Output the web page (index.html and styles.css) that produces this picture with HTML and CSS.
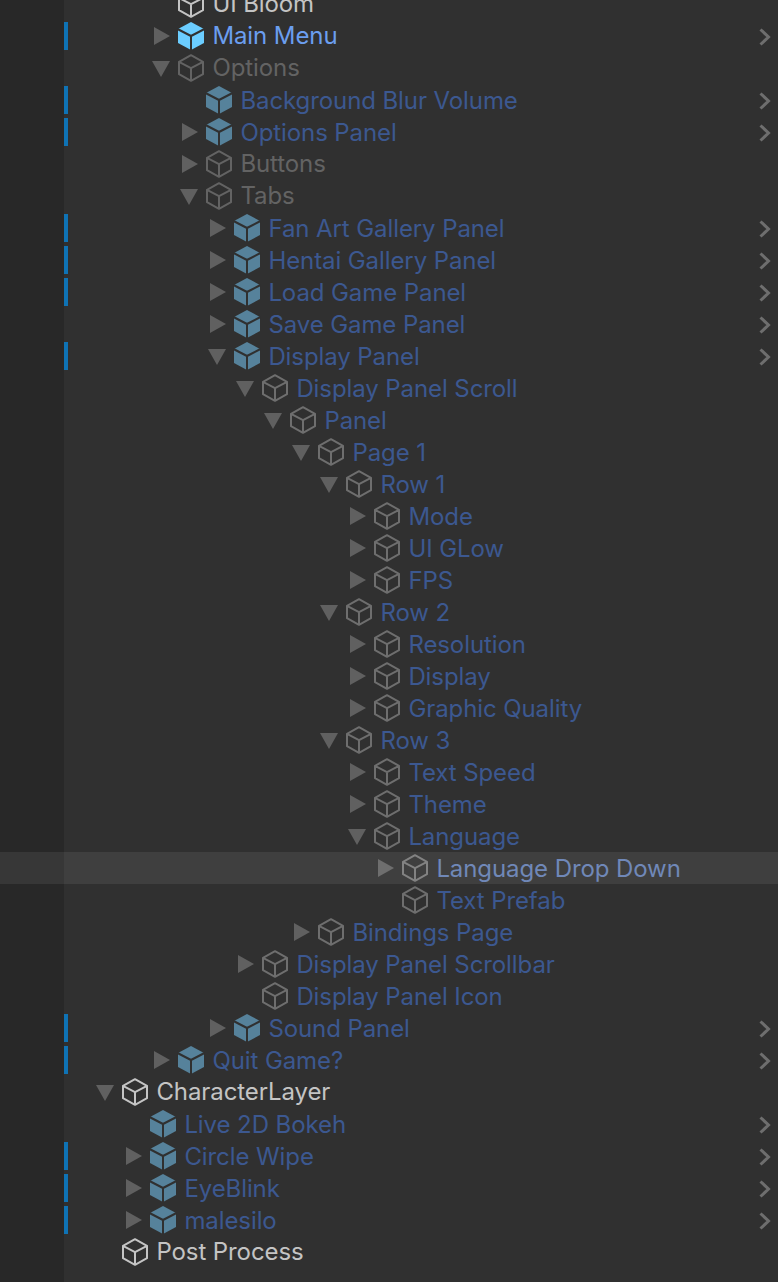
FILE: index.html
```html
<!DOCTYPE html>
<html lang="en">
<head>
<meta charset="utf-8">
<title>Hierarchy</title>
<link rel="stylesheet" href="styles.css">
</head>
<body>
<svg class="sprite" aria-hidden="true">
  <symbol id="cube" viewBox="0 0 28 28">
    <path class="cube-line" d="M14 1.2 26 7.8V20.2L14 26.8 2 20.2V7.8ZM2.5 8.2 14 14.2 25.5 8.2M14 14.2V26.5"/>
  </symbol>
  <symbol id="cube-fill" viewBox="0 0 28 28">
    <path class="cube-solid" d="M14 0 27 7V21L14 28 1 21V7Z"/>
    <path class="cube-cut" d="M.5 7 14 14 27.5 7M14 14V28"/>
  </symbol>
  <symbol id="tri-r" viewBox="0 0 16 18"><path d="M0 0 16 9 0 18Z"/></symbol>
  <symbol id="tri-d" viewBox="0 0 18 16"><path d="M0 0H18L9 16Z"/></symbol>
  <symbol id="chev" viewBox="0 0 12 18"><path d="M1.5 1.5 9.5 9 1.5 16.5" fill="none" stroke="currentColor" stroke-width="3"/></symbol>
</svg>
<main class="tree">
  <div class="row d2 plain"><span class="gutter"></span><span class="twist"></span><svg class="ico"><use href="#cube"/></svg><span class="name">UI Bloom</span></div>
  <div class="row d2 prefab active marked"><span class="gutter"></span><svg class="twist"><use href="#tri-r"/></svg><svg class="ico"><use href="#cube-fill"/></svg><span class="name">Main Menu</span><svg class="chev"><use href="#chev"/></svg></div>
  <div class="row d2 off"><span class="gutter"></span><svg class="twist open"><use href="#tri-d"/></svg><svg class="ico"><use href="#cube"/></svg><span class="name">Options</span></div>
  <div class="row d3 prefab marked"><span class="gutter"></span><span class="twist"></span><svg class="ico"><use href="#cube-fill"/></svg><span class="name">Background Blur Volume</span><svg class="chev"><use href="#chev"/></svg></div>
  <div class="row d3 prefab marked"><span class="gutter"></span><svg class="twist"><use href="#tri-r"/></svg><svg class="ico"><use href="#cube-fill"/></svg><span class="name">Options Panel</span><svg class="chev"><use href="#chev"/></svg></div>
  <div class="row d3 off"><span class="gutter"></span><svg class="twist"><use href="#tri-r"/></svg><svg class="ico"><use href="#cube"/></svg><span class="name">Buttons</span></div>
  <div class="row d3 off"><span class="gutter"></span><svg class="twist open"><use href="#tri-d"/></svg><svg class="ico"><use href="#cube"/></svg><span class="name">Tabs</span></div>
  <div class="row d4 prefab marked"><span class="gutter"></span><svg class="twist"><use href="#tri-r"/></svg><svg class="ico"><use href="#cube-fill"/></svg><span class="name">Fan Art Gallery Panel</span><svg class="chev"><use href="#chev"/></svg></div>
  <div class="row d4 prefab marked"><span class="gutter"></span><svg class="twist"><use href="#tri-r"/></svg><svg class="ico"><use href="#cube-fill"/></svg><span class="name">Hentai Gallery Panel</span><svg class="chev"><use href="#chev"/></svg></div>
  <div class="row d4 prefab marked"><span class="gutter"></span><svg class="twist"><use href="#tri-r"/></svg><svg class="ico"><use href="#cube-fill"/></svg><span class="name">Load Game Panel</span><svg class="chev"><use href="#chev"/></svg></div>
  <div class="row d4 prefab"><span class="gutter"></span><svg class="twist"><use href="#tri-r"/></svg><svg class="ico"><use href="#cube-fill"/></svg><span class="name">Save Game Panel</span><svg class="chev"><use href="#chev"/></svg></div>
  <div class="row d4 prefab marked"><span class="gutter"></span><svg class="twist open"><use href="#tri-d"/></svg><svg class="ico"><use href="#cube-fill"/></svg><span class="name">Display Panel</span><svg class="chev"><use href="#chev"/></svg></div>
  <div class="row d5 child"><span class="gutter"></span><svg class="twist open"><use href="#tri-d"/></svg><svg class="ico"><use href="#cube"/></svg><span class="name">Display Panel Scroll</span></div>
  <div class="row d6 child"><span class="gutter"></span><svg class="twist open"><use href="#tri-d"/></svg><svg class="ico"><use href="#cube"/></svg><span class="name">Panel</span></div>
  <div class="row d7 child"><span class="gutter"></span><svg class="twist open"><use href="#tri-d"/></svg><svg class="ico"><use href="#cube"/></svg><span class="name">Page 1</span></div>
  <div class="row d8 child"><span class="gutter"></span><svg class="twist open"><use href="#tri-d"/></svg><svg class="ico"><use href="#cube"/></svg><span class="name">Row 1</span></div>
  <div class="row d9 child"><span class="gutter"></span><svg class="twist"><use href="#tri-r"/></svg><svg class="ico"><use href="#cube"/></svg><span class="name">Mode</span></div>
  <div class="row d9 child"><span class="gutter"></span><svg class="twist"><use href="#tri-r"/></svg><svg class="ico"><use href="#cube"/></svg><span class="name">UI GLow</span></div>
  <div class="row d9 child"><span class="gutter"></span><svg class="twist"><use href="#tri-r"/></svg><svg class="ico"><use href="#cube"/></svg><span class="name">FPS</span></div>
  <div class="row d8 child"><span class="gutter"></span><svg class="twist open"><use href="#tri-d"/></svg><svg class="ico"><use href="#cube"/></svg><span class="name">Row 2</span></div>
  <div class="row d9 child"><span class="gutter"></span><svg class="twist"><use href="#tri-r"/></svg><svg class="ico"><use href="#cube"/></svg><span class="name">Resolution</span></div>
  <div class="row d9 child"><span class="gutter"></span><svg class="twist"><use href="#tri-r"/></svg><svg class="ico"><use href="#cube"/></svg><span class="name">Display</span></div>
  <div class="row d9 child"><span class="gutter"></span><svg class="twist"><use href="#tri-r"/></svg><svg class="ico"><use href="#cube"/></svg><span class="name">Graphic Quality</span></div>
  <div class="row d8 child"><span class="gutter"></span><svg class="twist open"><use href="#tri-d"/></svg><svg class="ico"><use href="#cube"/></svg><span class="name">Row 3</span></div>
  <div class="row d9 child"><span class="gutter"></span><svg class="twist"><use href="#tri-r"/></svg><svg class="ico"><use href="#cube"/></svg><span class="name">Text Speed</span></div>
  <div class="row d9 child"><span class="gutter"></span><svg class="twist"><use href="#tri-r"/></svg><svg class="ico"><use href="#cube"/></svg><span class="name">Theme</span></div>
  <div class="row d9 child"><span class="gutter"></span><svg class="twist open"><use href="#tri-d"/></svg><svg class="ico"><use href="#cube"/></svg><span class="name">Language</span></div>
  <div class="row d10 child hover"><span class="gutter"></span><svg class="twist"><use href="#tri-r"/></svg><svg class="ico"><use href="#cube"/></svg><span class="name">Language Drop Down</span></div>
  <div class="row d10 child"><span class="gutter"></span><span class="twist"></span><svg class="ico"><use href="#cube"/></svg><span class="name">Text Prefab</span></div>
  <div class="row d7 child"><span class="gutter"></span><svg class="twist"><use href="#tri-r"/></svg><svg class="ico"><use href="#cube"/></svg><span class="name">Bindings Page</span></div>
  <div class="row d5 child"><span class="gutter"></span><svg class="twist"><use href="#tri-r"/></svg><svg class="ico"><use href="#cube"/></svg><span class="name">Display Panel Scrollbar</span></div>
  <div class="row d5 child"><span class="gutter"></span><span class="twist"></span><svg class="ico"><use href="#cube"/></svg><span class="name">Display Panel Icon</span></div>
  <div class="row d4 prefab marked"><span class="gutter"></span><svg class="twist"><use href="#tri-r"/></svg><svg class="ico"><use href="#cube-fill"/></svg><span class="name">Sound Panel</span><svg class="chev"><use href="#chev"/></svg></div>
  <div class="row d2 prefab marked"><span class="gutter"></span><svg class="twist"><use href="#tri-r"/></svg><svg class="ico"><use href="#cube-fill"/></svg><span class="name">Quit Game?</span><svg class="chev"><use href="#chev"/></svg></div>
  <div class="row d0 plain"><span class="gutter"></span><svg class="twist open"><use href="#tri-d"/></svg><svg class="ico"><use href="#cube"/></svg><span class="name">CharacterLayer</span></div>
  <div class="row d1 prefab"><span class="gutter"></span><span class="twist"></span><svg class="ico"><use href="#cube-fill"/></svg><span class="name">Live 2D Bokeh</span><svg class="chev"><use href="#chev"/></svg></div>
  <div class="row d1 prefab marked"><span class="gutter"></span><svg class="twist"><use href="#tri-r"/></svg><svg class="ico"><use href="#cube-fill"/></svg><span class="name">Circle Wipe</span><svg class="chev"><use href="#chev"/></svg></div>
  <div class="row d1 prefab marked"><span class="gutter"></span><svg class="twist"><use href="#tri-r"/></svg><svg class="ico"><use href="#cube-fill"/></svg><span class="name">EyeBlink</span><svg class="chev"><use href="#chev"/></svg></div>
  <div class="row d1 prefab marked"><span class="gutter"></span><svg class="twist"><use href="#tri-r"/></svg><svg class="ico"><use href="#cube-fill"/></svg><span class="name">malesilo</span><svg class="chev"><use href="#chev"/></svg></div>
  <div class="row d0 plain"><span class="gutter"></span><span class="twist"></span><svg class="ico"><use href="#cube"/></svg><span class="name">Post Process</span></div>
  <div class="row tail"><span class="gutter"></span></div>
</main>
</body>
</html>
```
FILE: styles.css
```css
html, body {
  margin: 0;
  height: 1282px;
  overflow: hidden;
  background: #303030;
}
.sprite {
  display: none;
}
.tree {
  margin-top: -12px;
  font-family: Inter, "Noto Sans", sans-serif;
  font-size: 24px;
  letter-spacing: -0.09px;
}
.row {
  display: flex;
  align-items: center;
  height: 32px;
  position: relative;
  background: #303030;
  color: #c4c4c4;
  --ind: 0px;
  --ico: #c4c4c4;
  --solid: #56829b;
}
.gutter {
  align-self: stretch;
  flex: none;
  width: 64px;
  margin-right: calc(34px + var(--ind));
  background: #282828;
}
.d1 { --ind: 28px; }
.d2 { --ind: 56px; }
.d3 { --ind: 84px; }
.d4 { --ind: 112px; }
.d5 { --ind: 140px; }
.d6 { --ind: 168px; }
.d7 { --ind: 196px; }
.d8 { --ind: 224px; }
.d9 { --ind: 252px; }
.d10 { --ind: 280px; }
.twist {
  flex: none;
  width: 16px;
  height: 18px;
  margin-right: 7px;
  fill: #606060;
}
.twist.open {
  width: 18px;
  height: 16px;
  margin-left: -2px;
  margin-top: 2px;
}
.ico {
  flex: none;
  width: 28px;
  height: 28px;
  margin-right: 7.4px;
}
.cube-line {
  fill: none;
  stroke: var(--ico);
  stroke-width: 2;
  stroke-linejoin: round;
}
.cube-solid {
  fill: var(--solid);
}
.cube-cut {
  fill: none;
  stroke: #303030;
  stroke-width: 2;
}
.name {
  white-space: nowrap;
  line-height: 32px;
}
.chev {
  width: 12px;
  height: 18px;
  margin-left: auto;
  margin-right: 7px;
  margin-top: 2px;
  color: #6e6e6e;
}
.prefab .name,
.child .name {
  color: #3c5890;
  padding-top: 2px;
}
.child {
  --ico: #6e6e6e;
}
.off {
  --ico: #636363;
  color: #636363;
}
.active {
  --solid: #6bcdff;
}
.row.active .name {
  color: #6b9eef;
  padding-top: 0;
}
.marked::before {
  content: "";
  position: absolute;
  left: 64px;
  top: 2px;
  bottom: 2px;
  width: 4px;
  background: #0f73b5;
}
.hover {
  background: #3f3f3f;
  --ico: #828282;
}
.hover .gutter {
  background: #373737;
}
.row.hover .name {
  color: #7088b8;
}
.hover .twist {
  fill: #6e6e6e;
}
.tail {
  height: 14px;
}
```
